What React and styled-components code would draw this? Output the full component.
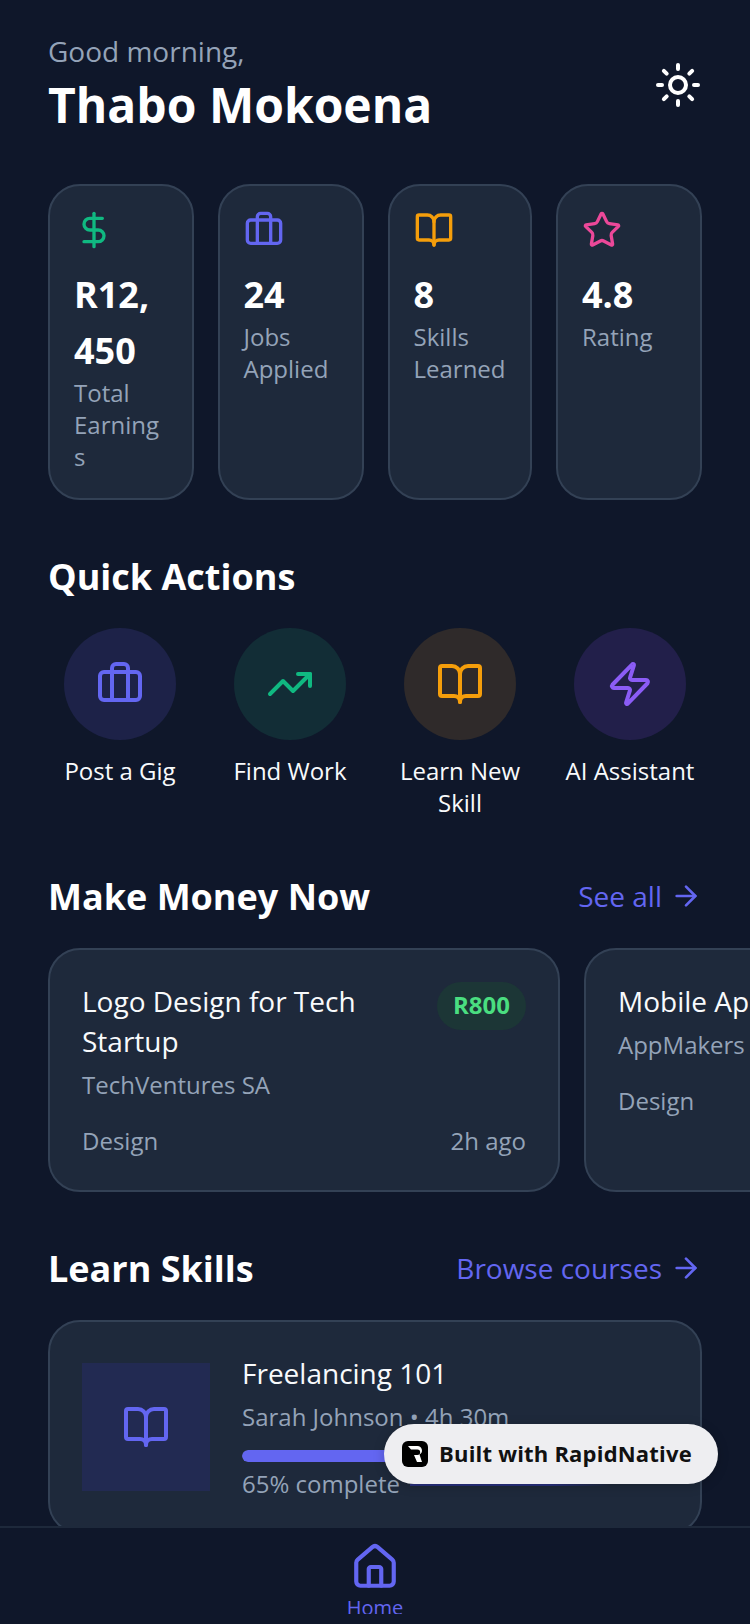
import React from 'react'
import styled, { createGlobalStyle } from 'styled-components'
import { ArrowRight, BookOpen, Briefcase, DollarSign, House, Star, Sun, TrendingUp, Zap } from 'lucide-react'

const stats = [
  { icon: DollarSign, color: '#10b981', value: 'R12,450', label: 'Total Earnings' },
  { icon: Briefcase, color: '#6366f1', value: '24', label: 'Jobs Applied' },
  { icon: BookOpen, color: '#f59e0b', value: '8', label: 'Skills Learned' },
  { icon: Star, color: '#ec4899', value: '4.8', label: 'Rating' },
]

const actions = [
  { icon: Briefcase, color: '#6366f1', tint: '#1d2248', label: 'Post a Gig' },
  { icon: TrendingUp, color: '#10b981', tint: '#122d36', label: 'Find Work' },
  { icon: BookOpen, color: '#f59e0b', tint: '#2f2a2a', label: 'Learn New Skill' },
  { icon: Zap, color: '#8b5cf6', tint: '#221f4a', label: 'AI Assistant' },
]

const App = () => {
  return (
    <Screen>
      <GlobalStyle />
      <Scroll>
        <Header>
          <div>
            <Greeting>Good morning,</Greeting>
            <Name>Thabo Mokoena</Name>
          </div>
          <Sun size={48} color="#fff" strokeWidth={2} />
        </Header>

        <StatRow>
          {stats.map((s) => (
            <StatCard key={s.label}>
              <s.icon size={40} color={s.color} strokeWidth={2} />
              <StatValue>{s.value}</StatValue>
              <StatLabel>{s.label}</StatLabel>
            </StatCard>
          ))}
        </StatRow>

        <Section>
          <SectionHead>
            <SectionTitle>Quick Actions</SectionTitle>
          </SectionHead>
          <ActionRow>
            {actions.map((a) => (
              <Action key={a.label}>
                <ActionCircle $tint={a.tint}>
                  <a.icon size={48} color={a.color} strokeWidth={2} />
                </ActionCircle>
                <ActionLabel>{a.label}</ActionLabel>
              </Action>
            ))}
          </ActionRow>
        </Section>

        <MoneySection>
          <SectionHead>
            <SectionTitle>Make Money Now</SectionTitle>
            <HeadLink>
              See all <ArrowRight size={32} color="#6366f1" strokeWidth={2} />
            </HeadLink>
          </SectionHead>
          <GigRail>
            <GigCard>
              <GigTop>
                <GigText>
                  <CardTitle>Logo Design for Tech Startup</CardTitle>
                  <Muted>TechVentures SA</Muted>
                </GigText>
                <Price>R800</Price>
              </GigTop>
              <GigFoot>
                <Muted>Design</Muted>
                <Muted>2h ago</Muted>
              </GigFoot>
            </GigCard>
            <GigCard>
              <GigTop>
                <GigText>
                  <CardTitle>Mobile App UI</CardTitle>
                  <Muted>AppMakers</Muted>
                </GigText>
                <Price>R2500</Price>
              </GigTop>
              <GigFoot>
                <Muted>Design</Muted>
                <Muted>5h ago</Muted>
              </GigFoot>
            </GigCard>
          </GigRail>
        </MoneySection>

        <Section>
          <SectionHead>
            <SectionTitle>Learn Skills</SectionTitle>
            <HeadLink>
              Browse courses <ArrowRight size={32} color="#6366f1" strokeWidth={2} />
            </HeadLink>
          </SectionHead>
          <CourseCard>
            <Thumb>
              <BookOpen size={48} color="#6366f1" strokeWidth={2} />
            </Thumb>
            <CourseBody>
              <CourseTitle>Freelancing 101</CourseTitle>
              <CourseMeta>Sarah Johnson • 4h 30m</CourseMeta>
              <Track>
                <Fill style={{ width: '65%' }} />
              </Track>
              <Muted>65% complete</Muted>
            </CourseBody>
          </CourseCard>
        </Section>
      </Scroll>

      <TabBar>
        <Tab>
          <House size={50} color="#6366f1" strokeWidth={2} />
          <TabLabel>Home</TabLabel>
        </Tab>
      </TabBar>

      <BuiltPill>
        <PillLogo>
          <svg width="16" height="18" viewBox="0 0 16 18">
            <path d="M1 1h9.500a4.500 4.500 0 0 1 2 8.500L15 17h-5l-3-7h3.400a1.400 1.400 0 0 0 0-5.500H4z" fill="#fff" />
          </svg>
        </PillLogo>
        <PillText>Built with RapidNative</PillText>
      </BuiltPill>
    </Screen>
  )
}

export default App

const GlobalStyle = createGlobalStyle`
  * { box-sizing: border-box; }
  html, body { margin: 0; padding: 0; background: #0f172a; }
  body { font-family: "Open Sans", "Noto Sans", sans-serif; }
`

const Screen = styled.div`
  position: relative;
  width: 750px;
  height: 1624px;
  display: flex;
  flex-direction: column;
  background: #0f172a;
  overflow: hidden;
`
const Scroll = styled.div`
  flex: 1;
  min-height: 0;
  overflow: hidden;
  padding: 32px 48px 0;
`
const Header = styled.div`
  display: flex;
  justify-content: space-between;
  align-items: center;
`
const Greeting = styled.div`
  color: #94a3b8;
  font-size: 28px;
  line-height: 38px;
`
const Name = styled.div`
  margin-top: 3px;
  color: #fff;
  font-size: 48px;
  font-weight: 700;
  line-height: 64px;
`
const StatRow = styled.div`
  display: grid;
  grid-template-columns: 145.5px 146px 144.5px 146px;
  gap: 24px;
  margin-top: 47px;
`
const StatCard = styled.div`
  min-width: 0;
  padding: 24px 24px 25px;
  background: #1e293b;
  border: 2px solid #334155;
  border-radius: 32px;
  svg { display: block; }
`
const StatValue = styled.div`
  color: #fff;
  font-size: 36px;
  font-weight: 700;
  line-height: 56px;
  margin-top: 17px;
  overflow-wrap: anywhere;
`
const StatLabel = styled.div`
  margin: -2px -1px 0 0;
  color: #94a3b8;
  font-size: 24px;
  line-height: 32px;
  overflow-wrap: anywhere;
`
const Section = styled.div`
  margin-top: 55px;
`
const MoneySection = styled(Section)`
  margin-top: 56px;
`
const SectionHead = styled.div`
  display: flex;
  justify-content: space-between;
  align-items: center;
  height: 44px;
  margin-bottom: 29px;
`
const SectionTitle = styled.div`
  color: #fff;
  font-size: 36px;
  font-weight: 700;
  line-height: 44px;
`
const HeadLink = styled.div`
  display: flex;
  align-items: center;
  gap: 8px;
  margin-top: -2px;
  color: #6366f1;
  font-size: 28px;
  line-height: 36px;
`
const ActionRow = styled.div`
  display: grid;
  grid-template-columns: repeat(4, 146px);
  gap: 24px;
  margin-left: -1px;
`
const Action = styled.div`
  min-width: 0;
  display: flex;
  flex-direction: column;
  align-items: center;
`
const ActionCircle = styled.div`
  width: 112px;
  height: 112px;
  border-radius: 50%;
  display: flex;
  align-items: center;
  justify-content: center;
  background: ${(p) => p.$tint};
`
const ActionLabel = styled.div`
  margin-top: 15px;
  color: #f8fafc;
  font-size: 24px;
  line-height: 32px;
  text-align: center;
`
const GigRail = styled.div`
  display: flex;
  gap: 24px;
  width: 1200px;
`
const GigCard = styled.div`
  width: 512px;
  flex: none;
  padding: 31px 32px 33px;
  background: #1e293b;
  border: 2px solid #334155;
  border-radius: 32px;
`
const GigTop = styled.div`
  display: flex;
  justify-content: space-between;
  align-items: flex-start;
  gap: 16px;
`
const GigText = styled.div`
  flex: 1;
  min-width: 0;
  display: flex;
  flex-direction: column;
  gap: 8px;
`
const CardTitle = styled.div`
  color: #f8fafc;
  font-size: 28px;
  line-height: 40px;
`
const Muted = styled.div`
  color: #94a3b8;
  font-size: 24px;
  line-height: 32px;
`
const Price = styled.div`
  flex: none;
  margin-top: 1px;
  padding: 7px 16px 9px;
  border-radius: 24px;
  background: #1c3636;
  color: #4ade80;
  font-size: 24px;
  font-weight: 700;
  line-height: 32px;
`
const GigFoot = styled.div`
  display: flex;
  justify-content: space-between;
  margin-top: 24px;
`
const CourseCard = styled.div`
  display: flex;
  align-items: center;
  gap: 32px;
  padding: 32px;
  background: #1e293b;
  border: 2px solid #334155;
  border-radius: 32px;
`
const Thumb = styled.div`
  width: 128px;
  height: 128px;
  flex: none;
  display: flex;
  align-items: center;
  justify-content: center;
  background: #222a52;
`
const CourseBody = styled.div`
  flex: 1;
  min-width: 0;
`
const CourseTitle = styled(CardTitle)`
  line-height: 38px;
`
const CourseMeta = styled(Muted)`
  margin-top: 9px;
`
const Track = styled.div`
  height: 12px;
  margin: 17px 0 6px;
  border-radius: 6px;
  background: #334155;
  overflow: hidden;
`
const Fill = styled.div`
  height: 100%;
  border-radius: 6px;
  background: #6366f1;
`
const TabBar = styled.div`
  flex: none;
  height: 98px;
  padding-top: 14px;
  background: #0f172a;
  border-top: 2px solid #1e293b;
  display: flex;
  justify-content: center;
`
const Tab = styled.div`
  height: 72px;
  overflow: hidden;
  display: flex;
  flex-direction: column;
  align-items: center;
  svg { flex: none; }
`
const TabLabel = styled.div`
  margin-top: 2px;
  color: #6366f1;
  font-size: 20px;
  line-height: 28px;
`
const BuiltPill = styled.div`
  position: absolute;
  left: 384px;
  top: 1424px;
  width: 334px;
  height: 60px;
  display: flex;
  align-items: center;
  gap: 11px;
  padding-left: 18px;
  border-radius: 30px;
  background: #eeeef1;
  box-shadow: 0 2px 12px rgba(0, 0, 0, 0.2);
  &::after {
    content: '';
    position: absolute;
    left: 26px;
    top: 60px;
    width: 200px;
    height: 2px;
    background: linear-gradient(90deg, #232a70 70%, rgba(35, 42, 112, 0));
  }
`
const PillLogo = styled.div`
  width: 26px;
  height: 26px;
  flex: none;
  border-radius: 6px;
  background: #000;
  display: flex;
  align-items: center;
  justify-content: center;
`
const PillText = styled.div`
  margin-top: -2px;
  color: #111;
  font-size: 22px;
  font-weight: 700;
  letter-spacing: 0.2px;
  white-space: nowrap;
`
